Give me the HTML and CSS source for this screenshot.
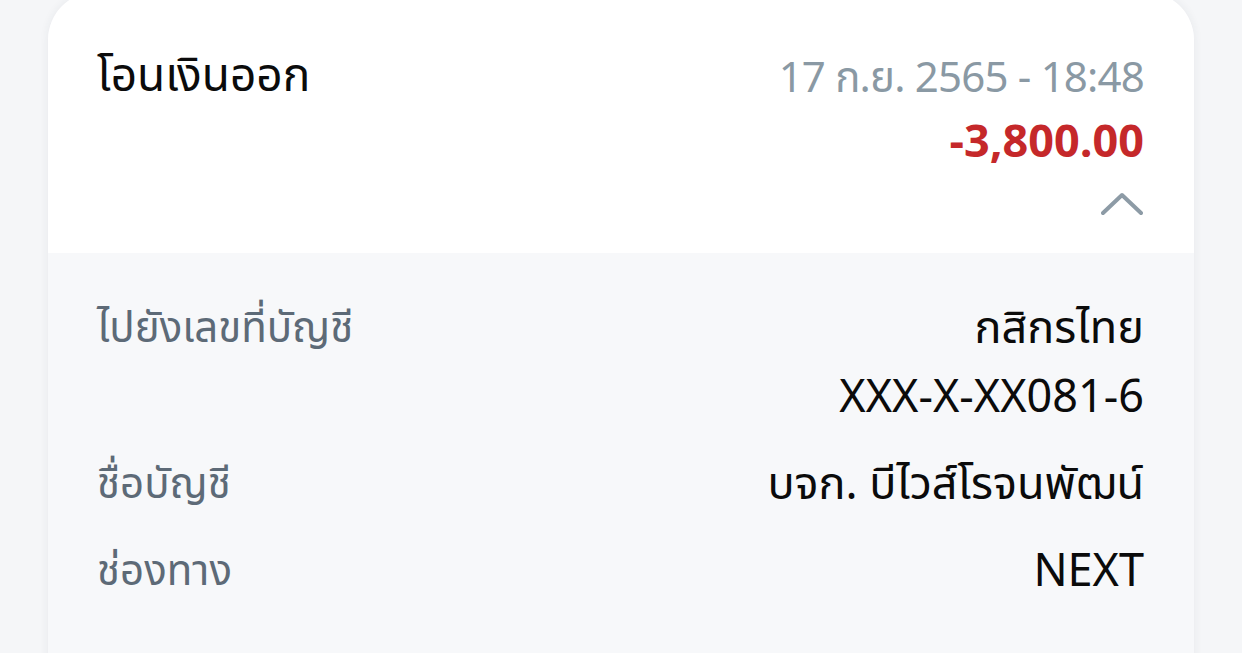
FILE: index.html
```html
<!DOCTYPE html>
<html lang="th">
<head>
<meta charset="utf-8">
<link rel="stylesheet" href="styles.css">
</head>
<body>
<div class="card">
  <div class="head">
    <div class="title">โอนเงินออก</div>
    <div class="meta">
      <div class="date">17 ก.ย. 2565 - 18:48</div>
      <div class="amount">-3,800.00</div>
      <svg class="chevron" width="42" height="24" viewBox="0 0 42 24"><path d="M2 21 L21 3 L40 21" fill="none" stroke="#8d9ba6" stroke-width="4" stroke-linecap="round" stroke-linejoin="round"/></svg>
    </div>
  </div>
  <div class="details">
    <div class="row">
      <div class="label">ไปยังเลขที่บัญชี</div>
      <div class="value">กสิกรไทย<br>XXX-X-XX081-6</div>
    </div>
    <div class="row">
      <div class="label">ชื่อบัญชี</div>
      <div class="value">บจก. บีไวส์โรจนพัฒน์</div>
    </div>
    <div class="row">
      <div class="label">ช่องทาง</div>
      <div class="value">NEXT</div>
    </div>
  </div>
</div>
</body>
</html>
```
FILE: styles.css
```css
html, body {
  margin: 0;
  padding: 0;
  height: 100%;
  overflow: hidden;
}
body {
  background: #f5f6f8;
  font-family: "Noto Sans Thai", "Noto Sans", "DejaVu Sans", sans-serif;
  padding: 0 48px;
}
.card {
  margin-top: -8px;
  background: #f7f8fa;
  border-radius: 48px 48px 0 0;
  box-shadow: 0 0 10px rgba(40, 50, 70, 0.07);
  min-height: 760px;
  overflow: hidden;
}
.head {
  background: #ffffff;
  height: 261px;
  box-sizing: border-box;
  padding: 55px 50px 0 49px;
  display: flex;
  justify-content: space-between;
  align-items: flex-start;
}
.title {
  font-size: 46px;
  line-height: 60px;
  color: #0b0b0b;
}
.meta {
  display: flex;
  flex-direction: column;
  align-items: flex-end;
  padding-top: 2px;
}
.date {
  font-size: 42px;
  line-height: 60px;
  color: #8a99a4;
  letter-spacing: -0.8px;
}
.amount {
  font-size: 45px;
  font-weight: 700;
  line-height: 69px;
  color: #c5282a;
}
.chevron {
  margin-top: 14px;
  margin-right: 1px;
}
.details {
  padding: 42px 50px 0 49px;
  display: flex;
  flex-direction: column;
  gap: 18px;
}
.row {
  display: flex;
  justify-content: space-between;
  align-items: flex-start;
}
.label {
  font-size: 42px;
  line-height: 69px;
  color: #5d6a77;
}
.value {
  font-size: 45px;
  line-height: 69px;
  color: #0b0b0b;
  text-align: right;
}
```
